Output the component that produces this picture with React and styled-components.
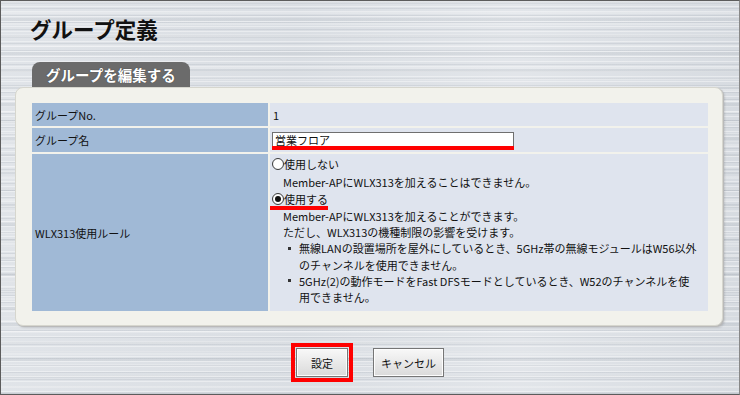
import React from 'react';
import styled, { createGlobalStyle, css } from 'styled-components';

const Global = createGlobalStyle`
  html, body { margin: 0; padding: 0; }
  body {
    font-family: "Noto Sans CJK JP", "Noto Sans", sans-serif;
    color: #111;
  }
`;

const Page = styled.div`
  box-sizing: border-box;
  width: 740px;
  height: 395px;
  border: 1px solid #5c5c5c;
  border-right-color: #888;
  overflow: hidden;
  display: flex;
  flex-direction: column;
  background-color: #dde1e6;
  background-image:
    repeating-linear-gradient(180deg, rgba(255,255,255,0.40) 0 1px, transparent 1px 5px),
    repeating-linear-gradient(180deg, rgba(110,120,135,0.12) 0 1px, transparent 1px 7px),
    repeating-linear-gradient(180deg, rgba(255,255,255,0.22) 0 2px, transparent 2px 11px),
    repeating-linear-gradient(180deg, rgba(120,130,140,0.10) 0 3px, transparent 3px 17px),
    linear-gradient(90deg, rgba(255,255,255,0.10), rgba(200,205,212,0.15) 40%, rgba(255,255,255,0.15) 70%, rgba(190,196,204,0.2));
`;

const Title = styled.h1`
  margin: 16px 0 0 29px;
  font-size: 21.5px;
  line-height: 24px;
  font-weight: 700;
  color: #111;
`;

const Tab = styled.div`
  align-self: flex-start;
  margin: 21px 0 0 31px;
  box-sizing: border-box;
  width: 158px;
  height: 25px;
  padding-left: 14px;
  border-radius: 8px 8px 0 0;
  background: #6b6b6b;
  color: #fff;
  font-size: 14.5px;
  font-weight: 700;
  line-height: 26px;
  text-shadow: 0 0 1px #333;
`;

const Panel = styled.div`
  box-sizing: border-box;
  margin-left: 14px;
  width: 708px;
  padding: 15px 14px 14px 16px;
  background: #f2f2ec;
  border: 1px solid #d6d6ce;
  border-radius: 8px;
  box-shadow: 1px 1px 0 #b9b9b9, 2px 2px 2px rgba(0, 0, 0, 0.12);
`;

const Grid = styled.div`
  display: grid;
  grid-template-columns: 236px 1fr;
  grid-template-rows: 23px 24px 157px;
  gap: 2px;
`;

const Label = styled.div`
  box-sizing: border-box;
  background: #a0b9d6;
  display: flex;
  align-items: center;
  padding-left: 3px;
  font-size: 11px;
  color: #111;
`;

const Value = styled.div`
  box-sizing: border-box;
  background: #dfe4ee;
  font-size: 11px;
  color: #111;
  padding: ${p => p.$pad || '0 2px'};
  ${p => p.$center && css`
    display: flex;
    align-items: center;
  `}
`;

const InputWrap = styled.div`
  width: 242px;
  border-bottom: 4px solid #ff0000;
`;

const TextInput = styled.input`
  box-sizing: border-box;
  display: block;
  width: 242px;
  height: 14px;
  margin: 0;
  padding: 0 2px;
  border: 1px solid #6f6f6f;
  border-bottom: none;
  background: #fff;
  font-family: inherit;
  font-size: 11px;
  line-height: 13px;
  color: #111;
  outline: none;
`;

const RadioRow = styled.div`
  position: relative;
  display: flex;
  align-items: center;
  height: 18px;
  ${p => p.$marked && css`
    &::after {
      content: '';
      position: absolute;
      left: -2px;
      top: 16px;
      width: 58px;
      height: 4px;
      background: #ff0000;
    }
  `}
`;

const Radio = styled.span`
  box-sizing: border-box;
  width: 12px;
  height: 12px;
  border-radius: 50%;
  border: 1px solid #3b3b3b;
  background: radial-gradient(circle, #fff 55%, #e8e8e8);
  display: flex;
  align-items: center;
  justify-content: center;
  flex-shrink: 0;
  &::after {
    content: '';
    width: 6px;
    height: 6px;
    border-radius: 50%;
    background: ${p => (p.$checked ? '#111' : 'transparent')};
  }
`;

const Desc = styled.div`
  padding-left: 11px;
  margin-top: ${p => p.$mt || '0'};
  line-height: ${p => p.$lh || '16.1px'};
  white-space: nowrap;
`;

const Bullets = styled.ul`
  list-style: none;
  margin: 0;
  padding: 0;
`;

const Bullet = styled.li`
  display: flex;
  align-items: flex-start;
`;

const Marker = styled.span`
  width: 16px;
  height: 16.1px;
  display: flex;
  align-items: center;
  padding-left: 5px;
  box-sizing: border-box;
  flex-shrink: 0;
  &::before {
    content: '';
    width: 3px;
    height: 3px;
    background: #333;
  }
`;

const Buttons = styled.div`
  display: flex;
  justify-content: center;
  align-items: center;
  gap: 25px;
  margin-top: 22px;
`;

const Button = styled.button`
  box-sizing: border-box;
  width: ${p => p.$w}px;
  height: 29px;
  margin: 0;
  padding: 0;
  border: 1px solid #767676;
  border-radius: 0;
  background: linear-gradient(#f8f8f8, #e6e6e6 60%, #dadada);
  box-shadow: inset 0 0 0 1px #fdfdfd;
  font-family: inherit;
  font-size: 11px;
  color: #111;
  ${p => p.$highlight && css`
    outline: 4px solid #ff0000;
    outline-offset: 1px;
  `}
`;

export default function App() {
  return (
    <>
      <Global />
      <Page>
        <Title>グループ定義</Title>
        <Tab>グループを編集する</Tab>
        <Panel>
          <Grid>
            <Label>グループNo.</Label>
            <Value $center $pad="0 3px">1</Value>

            <Label>グループ名</Label>
            <Value $pad="4px 2px 0">
              <InputWrap>
                <TextInput defaultValue="営業フロア" readOnly />
              </InputWrap>
            </Value>

            <Label>WLX313使用ルール</Label>
            <Value $pad="1px 2px 0">
              <RadioRow>
                <Radio />
                <span>使用しない</span>
              </RadioRow>
              <Desc $mt="1px" $lh="16.3px">Member-APにWLX313を加えることはできません。</Desc>
              <RadioRow $marked>
                <Radio $checked />
                <span>使用する</span>
              </RadioRow>
              <Desc>
                Member-APにWLX313を加えることができます。
                <br />
                ただし、WLX313の機種制限の影響を受けます。
                <Bullets>
                  <Bullet>
                    <Marker />
                    <span>
                      無線LANの設置場所を屋外にしているとき、5GHz帯の無線モジュールはW56以外
                      <br />
                      のチャンネルを使用できません。
                    </span>
                  </Bullet>
                  <Bullet>
                    <Marker />
                    <span>
                      5GHz(2)の動作モードをFast DFSモードとしているとき、W52のチャンネルを使
                      <br />
                      用できません。
                    </span>
                  </Bullet>
                </Bullets>
              </Desc>
            </Value>
          </Grid>
        </Panel>
        <Buttons>
          <Button $w={52} $highlight>設定</Button>
          <Button $w={71}>キャンセル</Button>
        </Buttons>
      </Page>
    </>
  );
}
